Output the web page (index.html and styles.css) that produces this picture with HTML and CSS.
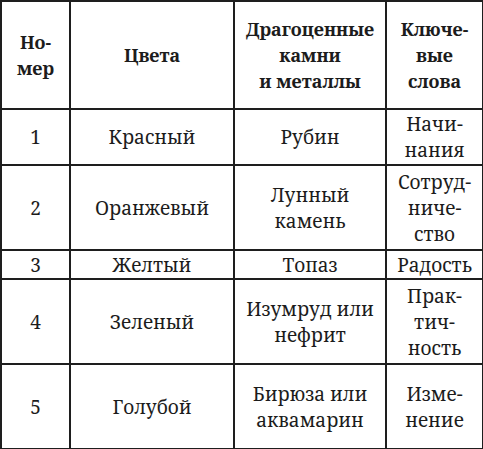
FILE: index.html
```html
<!DOCTYPE html>
<html lang="ru">
<head>
<meta charset="utf-8">
<link rel="stylesheet" href="styles.css">
</head>
<body>
<table class="tbl">
  <colgroup>
    <col class="c1"><col class="c2"><col class="c3"><col class="c4">
  </colgroup>
  <thead>
    <tr class="r-head">
      <th class="cell head">Но-<br>мер</th>
      <th class="cell head">Цвета</th>
      <th class="cell head">Драгоценные<br>камни<br>и металлы</th>
      <th class="cell head">Ключе-<br>вые<br>слова</th>
    </tr>
  </thead>
  <tbody>
    <tr class="r1">
      <td class="cell">1</td><td class="cell">Красный</td><td class="cell">Рубин</td><td class="cell">Начи-<br>нания</td>
    </tr>
    <tr class="r2">
      <td class="cell">2</td><td class="cell">Оранжевый</td><td class="cell">Лунный<br>камень</td><td class="cell">Сотруд-<br>ниче-<br>ство</td>
    </tr>
    <tr class="r3">
      <td class="cell">3</td><td class="cell">Желтый</td><td class="cell">Топаз</td><td class="cell">Радость</td>
    </tr>
    <tr class="r4">
      <td class="cell">4</td><td class="cell">Зеленый</td><td class="cell">Изумруд или<br>нефрит</td><td class="cell">Прак-<br>тич-<br>ность</td>
    </tr>
    <tr class="r5">
      <td class="cell">5</td><td class="cell">Голубой</td><td class="cell">Бирюза или<br>аквамарин</td><td class="cell">Изме-<br>нение</td>
    </tr>
  </tbody>
</table>
</body>
</html>
```
FILE: styles.css
```css
html, body {
  margin: 0;
  padding: 0;
  background: #ffffff;
}
.tbl {
  border-collapse: collapse;
  table-layout: fixed;
  width: 482px;
  color: #1c1c1c;
}
.c1 { width: 69px; }
.c2 { width: 164px; }
.c3 { width: 152px; }
.c4 { width: 97px; }
.cell {
  font-family: "Noto Serif", "Liberation Serif", serif;
  border: 2px solid #1e1e1e;
  text-align: center;
  vertical-align: middle;
  padding: 0;
  line-height: 26px;
  font-weight: normal;
  font-size: 19px;
}
.head {
  font-family: "Noto Serif", "Liberation Serif", serif;
  font-weight: bold;
  font-size: 18px;
}
.r-head { height: 108px; }
.r1 { height: 56px; }
.r2 { height: 85px; }
.r3 { height: 29px; }
.r4 { height: 85px; }
.r5 { height: 85px; }
```
